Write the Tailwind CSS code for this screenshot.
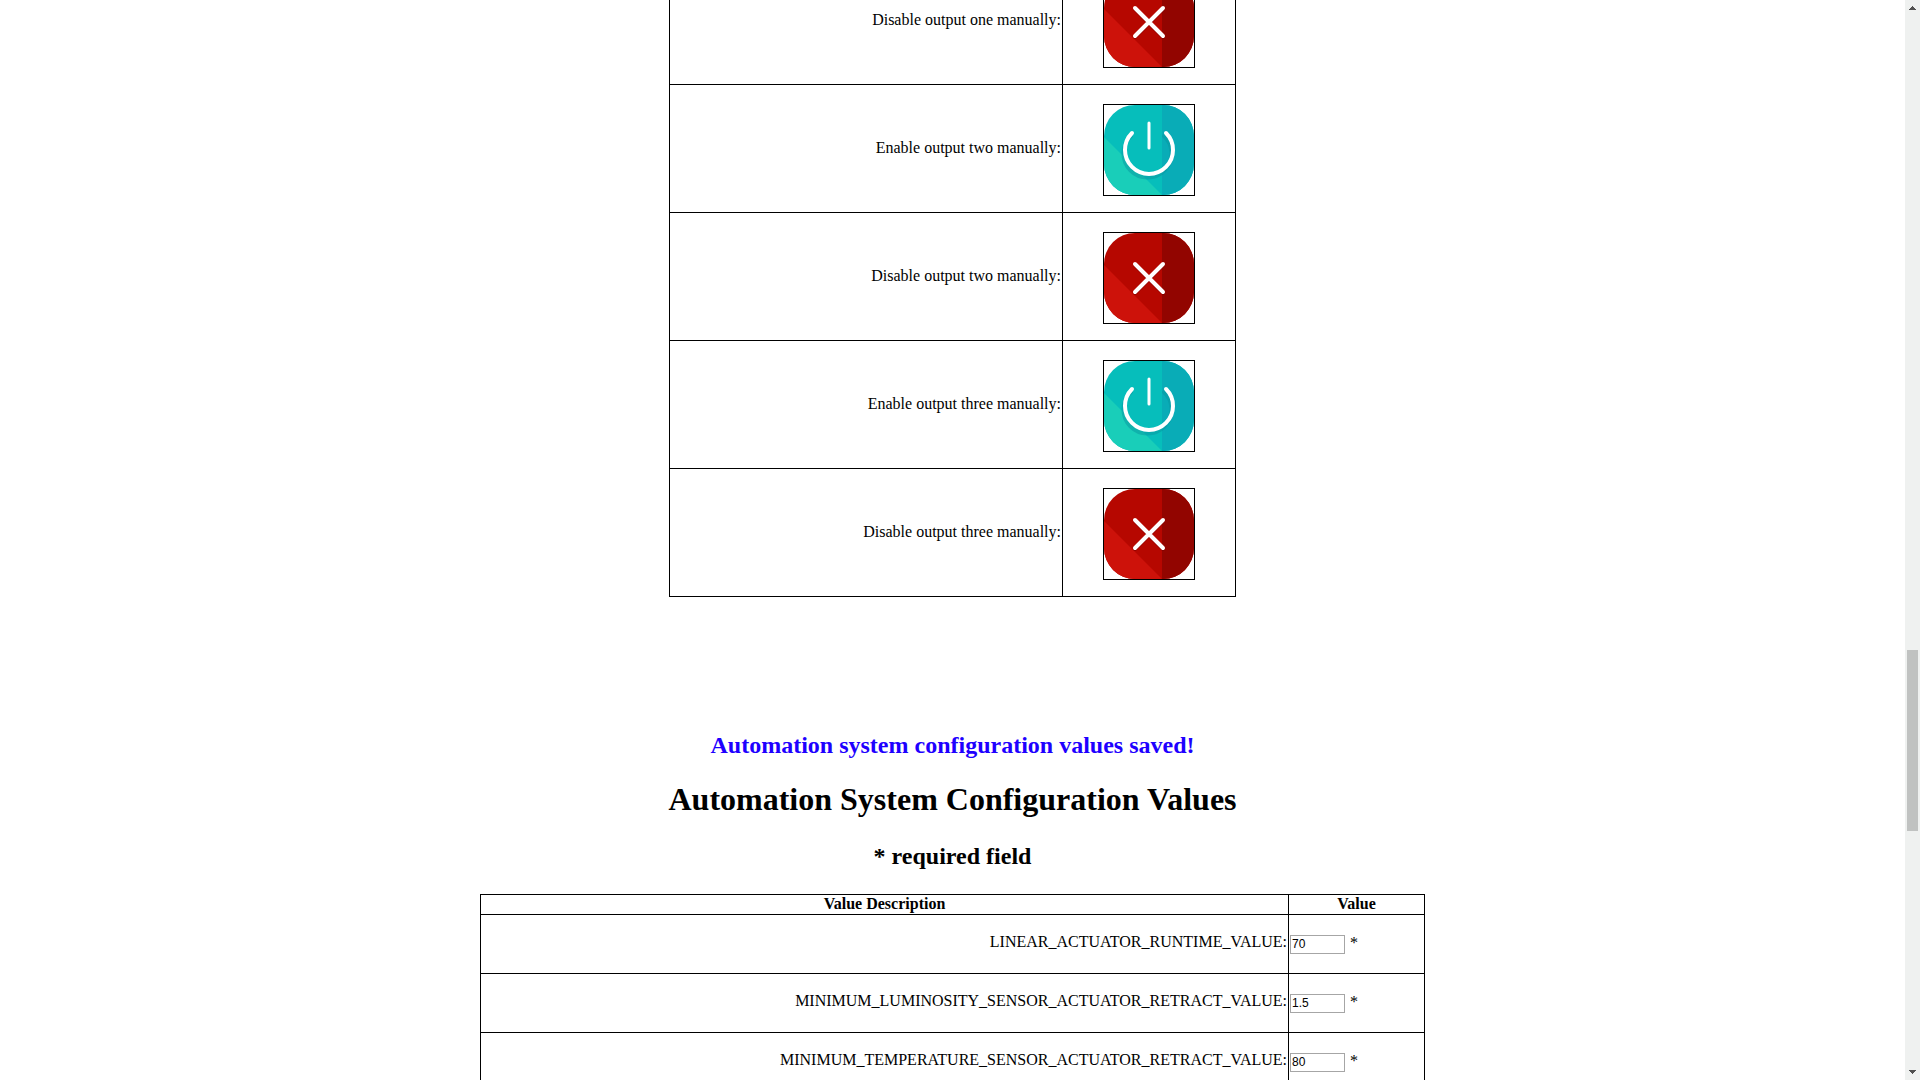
<!DOCTYPE html>
<html lang="en">
<head>
<meta charset="utf-8">
<title>Automation System Configuration</title>
<script src="https://cdn.jsdelivr.net/npm/@tailwindcss/browser@4"></script>
</head>
<body class="flex h-screen overflow-hidden bg-white font-['Liberation_Serif',serif] text-base leading-[18px] text-black">
<svg class="hidden" aria-hidden="true">
  <defs>
    <symbol id="power" viewBox="0 0 90 90">
      <rect width="90" height="90" fill="#06bebb"/>
      <path d="M0 32L58 90H0z" fill="#19ceb9"/>
      <path d="M58 0H90V90H58z" fill="#09acb7"/>
      <g fill="none" stroke-linecap="round">
        <path d="M27 31A24 24 0 1 0 60 31" stroke="#0796a0" stroke-opacity=".5" stroke-width="4"/>
        <path d="M28 28A24 24 0 1 0 62 28" stroke="#fff" stroke-width="4"/>
        <path d="M45 18V43" stroke="#fff" stroke-width="3"/>
      </g>
    </symbol>
    <symbol id="cross" viewBox="0 0 90 90">
      <rect width="90" height="90" fill="#b60700"/>
      <path d="M0 32L58 90H0z" fill="#cd120a"/>
      <path d="M58 0H90V90H58z" fill="#920500"/>
      <g fill="none" stroke-linecap="round" stroke-width="4">
        <path d="M31 32L59 60M59 32L31 60" stroke="#700" stroke-opacity=".5"/>
        <path d="M31 31L59 59M59 31L31 59" stroke="#fff"/>
      </g>
    </symbol>
  </defs>
</svg>
<main class="flex min-w-0 flex-1 flex-col items-center">
  <table class="-mt-11 w-[567px] shrink-0 table-fixed border-collapse">
    <colgroup><col><col class="w-[173px]"></colgroup>
    <tbody>
      <tr class="h-32">
        <td class="border border-black p-0 pr-px pb-0.5 text-right">Disable output one manually:</td>
        <td class="border border-black p-0 pt-[3px]"><button aria-label="Disable output one" class="mx-auto block size-[92px] border border-black"><svg class="size-full rounded-[31px]"><use href="#cross"/></svg></button></td>
      </tr>
      <tr class="h-32">
        <td class="border border-black p-0 pr-px pb-0.5 text-right">Enable output two manually:</td>
        <td class="border border-black p-0 pt-[3px]"><button aria-label="Enable output two" class="mx-auto block size-[92px] border border-black"><svg class="size-full rounded-[31px]"><use href="#power"/></svg></button></td>
      </tr>
      <tr class="h-32">
        <td class="border border-black p-0 pr-px pb-0.5 text-right">Disable output two manually:</td>
        <td class="border border-black p-0 pt-[3px]"><button aria-label="Disable output two" class="mx-auto block size-[92px] border border-black"><svg class="size-full rounded-[31px]"><use href="#cross"/></svg></button></td>
      </tr>
      <tr class="h-32">
        <td class="border border-black p-0 pr-px pb-0.5 text-right">Enable output three manually:</td>
        <td class="border border-black p-0 pt-[3px]"><button aria-label="Enable output three" class="mx-auto block size-[92px] border border-black"><svg class="size-full rounded-[31px]"><use href="#power"/></svg></button></td>
      </tr>
      <tr class="h-32">
        <td class="border border-black p-0 pr-px pb-0.5 text-right">Disable output three manually:</td>
        <td class="border border-black p-0 pt-[3px]"><button aria-label="Disable output three" class="mx-auto block size-[92px] border border-black"><svg class="size-full rounded-[31px]"><use href="#cross"/></svg></button></td>
      </tr>
    </tbody>
  </table>

  <h2 class="mt-[135px] text-2xl leading-[27px] font-bold text-[#1e00ff]">Automation system configuration values saved!</h2>
  <h1 class="mt-[22px] text-[32px] leading-[37px] font-bold">Automation System Configuration Values</h1>
  <h2 class="mt-[25px] text-2xl leading-[27px] font-bold">* required field</h2>

  <table class="mt-6 w-[945px] shrink-0 table-fixed border-collapse">
    <colgroup><col><col class="w-[136px]"></colgroup>
    <thead>
      <tr class="h-5">
        <th class="border border-black p-0 pb-px">Value Description</th>
        <th class="border border-black p-0 pb-px">Value</th>
      </tr>
    </thead>
    <tbody>
      <tr class="h-[59px]">
        <td class="border border-black p-0 pr-px pb-1 text-right"><label for="runtime">LINEAR_ACTUATOR_RUNTIME_VALUE:</label></td>
        <td class="border border-black p-0 pl-px"><div class="flex items-center gap-[5px]"><input id="runtime" type="text" value="70" class="h-[19px] w-[55px] border border-[#a6a6a6] px-px font-['Liberation_Sans',sans-serif] text-xs"><span class="pb-0.5">*</span></div></td>
      </tr>
      <tr class="h-[59px]">
        <td class="border border-black p-0 pr-px pb-1 text-right"><label for="luminosity">MINIMUM_LUMINOSITY_SENSOR_ACTUATOR_RETRACT_VALUE:</label></td>
        <td class="border border-black p-0 pl-px"><div class="flex items-center gap-[5px]"><input id="luminosity" type="text" value="1.5" class="h-[19px] w-[55px] border border-[#a6a6a6] px-px font-['Liberation_Sans',sans-serif] text-xs"><span class="pb-0.5">*</span></div></td>
      </tr>
      <tr class="h-[59px]">
        <td class="border border-black p-0 pr-px pb-1 text-right"><label for="temperature">MINIMUM_TEMPERATURE_SENSOR_ACTUATOR_RETRACT_VALUE:</label></td>
        <td class="border border-black p-0 pl-px"><div class="flex items-center gap-[5px]"><input id="temperature" type="text" value="80" class="h-[19px] w-[55px] border border-[#a6a6a6] px-px font-['Liberation_Sans',sans-serif] text-xs"><span class="pb-0.5">*</span></div></td>
      </tr>
    </tbody>
  </table>
</main>
<!-- Page scroll bar -->
<div class="flex w-[15px] shrink-0 flex-col items-center justify-between bg-[#eff1f0] py-1.5" aria-hidden="true">
  <svg class="h-1 w-[7px]" viewBox="0 0 7 4" shape-rendering="crispEdges" fill="#505050"><path d="M3 0h1v1h1v1h1v1h1v1H0V3h1V2h1V1h1z"/></svg>
  <div class="flex w-full flex-1 flex-col items-center pt-[640px]"><div class="h-[181px] w-[11px] bg-[#c0c2c1]"></div></div>
  <svg class="h-1 w-[7px]" viewBox="0 0 7 4" shape-rendering="crispEdges" fill="#505050"><path d="M0 0h7v1H6v1H5v1H4v1H3V3H2V2H1V1H0z"/></svg>
</div>
</body>
</html>
